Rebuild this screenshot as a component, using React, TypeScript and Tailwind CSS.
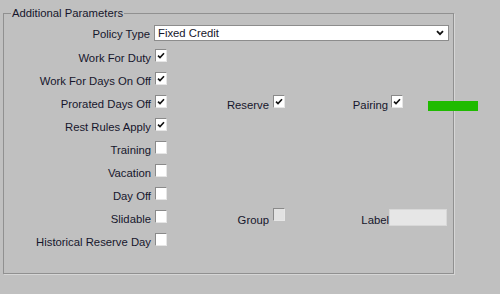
import React from "react";

/**
 * Small sunken checkbox, old Windows style
 */
function Box({ checked = false, disabled = false }: { checked?: boolean; disabled?: boolean }) {
  return (
    <span
      className={`flex h-[13px] w-[12px] shrink-0 items-center justify-center border border-t-[#8a8a8a] border-l-[#8a8a8a] border-r-[#e6e6e6] border-b-[#e6e6e6] ${
        disabled ? "bg-[#e2e2e2]" : "bg-white"
      }`}
    >
      {checked && (
        <svg width="8" height="7" viewBox="0 0 8 7">
          <path d="M1 3.6 L3 5.6 L7 1.2" fill="none" stroke="#111" strokeWidth="1.6" />
        </svg>
      )}
    </span>
  );
}

interface RowProps {
  label: string;
  checked?: boolean;
  children?: React.ReactNode;
}

/**
 * One labelled checkbox row of the left column
 */
function Row({ label, checked, children }: RowProps) {
  return (
    <div className="flex h-[23px] items-start">
      <span className="w-[147px] shrink-0 pt-[2px] text-right leading-[14px]">{label}</span>
      <span className="ml-[4px]">
        <Box checked={checked} />
      </span>
      {children}
    </div>
  );
}

export default function App() {
  return (
    <div
      className="h-[294px] w-[500px] overflow-hidden bg-[#c0c0c0] pt-[6px] pl-[3px] text-[11.3px] text-[#16162c]"
      style={{ fontFamily: '"Liberation Sans", Arial, sans-serif' }}
    >
      <fieldset className="h-[268px] w-[451px] min-w-0 border border-[#909090] shadow-[1px_1px_0_#d6d6d6]">
        <legend className="ml-[7px] px-[1px] leading-[14px]">Additional Parameters</legend>

        {/* Policy Type */}
        <div className="mt-[5px] flex h-[16px] items-start">
          <span className="w-[146px] pt-[2px] text-right leading-[14px]">Policy Type</span>
          <div className="ml-[4px] flex h-[16px] w-[295px] items-center justify-between border border-[#8c8c8c] bg-white pl-[3px] pr-[4px] leading-[14px]">
            <span>Fixed Credit</span>
            <svg width="8" height="6" viewBox="0 0 8 6">
              <path d="M1 1.2 L4 4.2 L7 1.2" fill="none" stroke="#111" strokeWidth="1.8" />
            </svg>
          </div>
        </div>

        <div className="mt-[8px] flex flex-col">
          <Row label="Work For Duty" checked />
          <Row label="Work For Days On Off" checked />
          <Row label="Prorated Days Off" checked>
            <span className="w-[102px] shrink-0 pt-[3px] text-right leading-[14px]">Reserve</span>
            <span className="ml-[4px]">
              <Box checked />
            </span>
            <span className="w-[103px] shrink-0 pt-[3px] text-right leading-[14px]">Pairing</span>
            <span className="ml-[3px]">
              <Box checked />
            </span>
            <span className="mt-[6px] ml-[25px] h-[10px] w-[50px] shrink-0 bg-[#1fbb00]" />
          </Row>
          <Row label="Rest Rules Apply" checked />
          <Row label="Training" />
          <Row label="Vacation" />
          <Row label="Day Off" />
          <Row label="Slidable">
            <span className="w-[102px] shrink-0 pt-[3px] text-right leading-[14px]">Group</span>
            <span className="ml-[4px] -mt-[2px]">
              <Box disabled />
            </span>
            <span className="w-[104px] shrink-0 pt-[3px] text-right leading-[14px]">Label</span>
            <span className="-mt-[1px] h-[17px] w-[58px] shrink-0 border border-[#d8d8d8] bg-[#e6e6e6]" />
          </Row>
          <Row label="Historical Reserve Day" />
        </div>
      </fieldset>
    </div>
  );
}
